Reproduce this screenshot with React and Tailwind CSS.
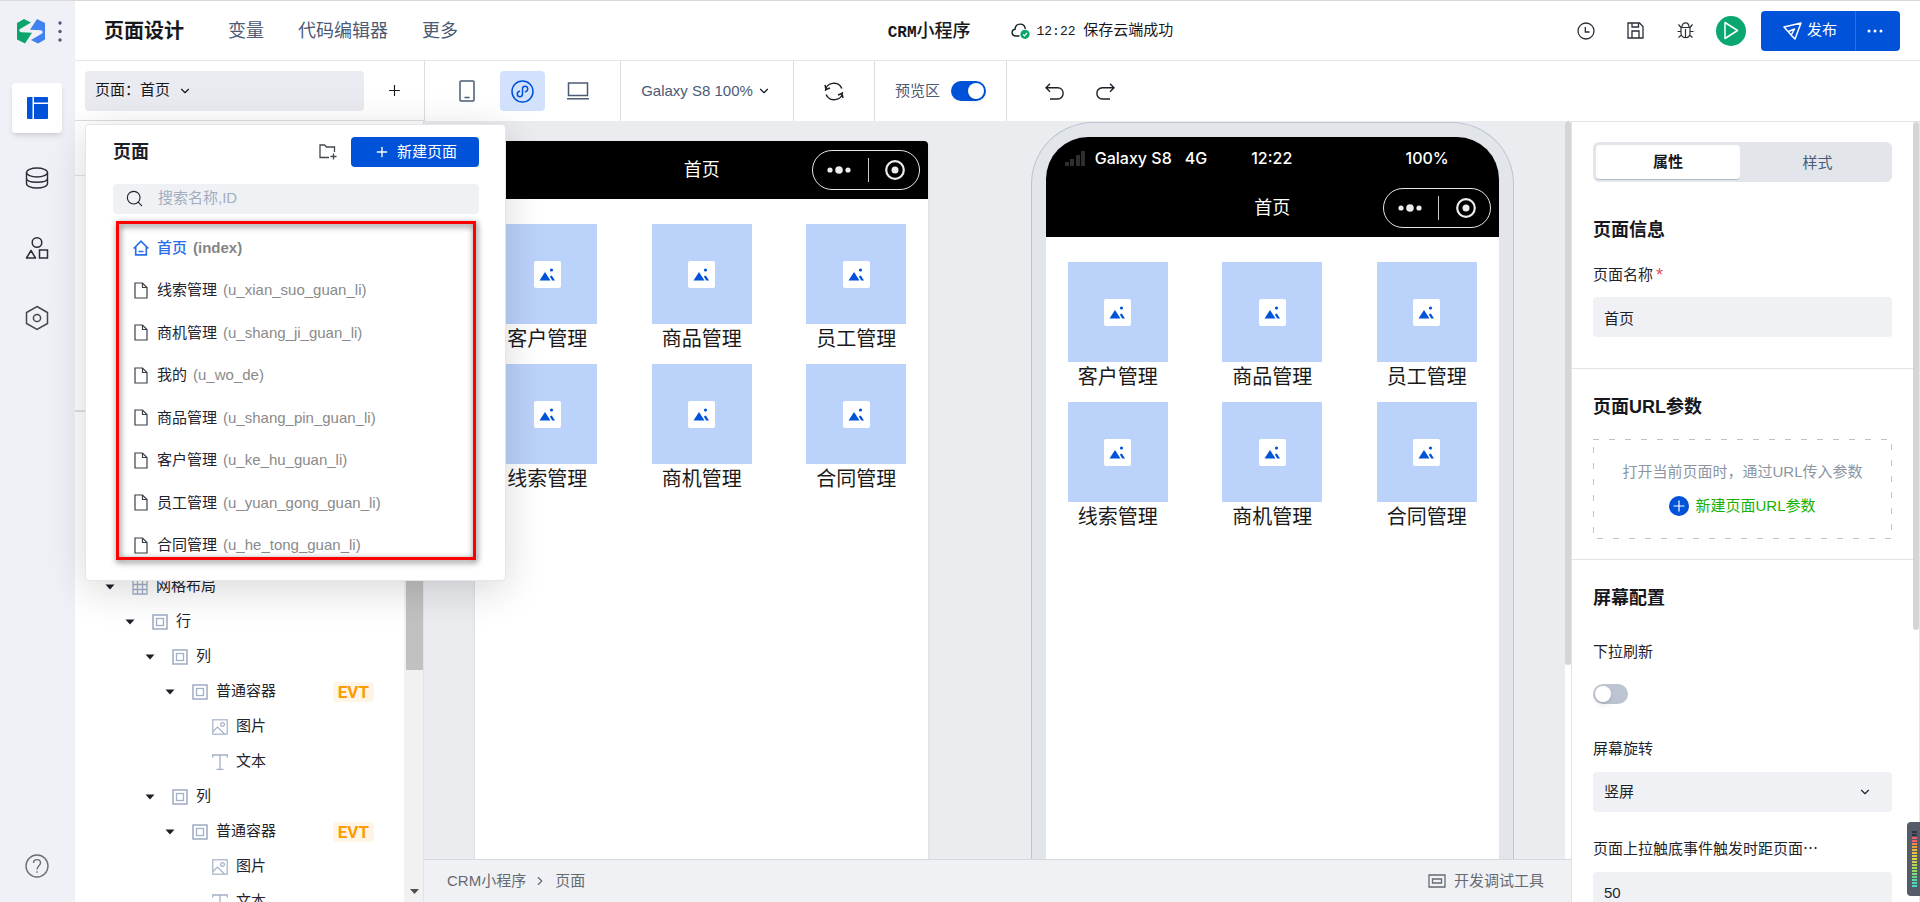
import React, { useState } from 'react';
import { ChevronDown, ChevronRight, Plus, Search } from 'lucide-react';

const pages = [
  { name: '线索管理', id: 'u_xian_suo_guan_li' },
  { name: '商机管理', id: 'u_shang_ji_guan_li' },
  { name: '我的', id: 'u_wo_de' },
  { name: '商品管理', id: 'u_shang_pin_guan_li' },
  { name: '客户管理', id: 'u_ke_hu_guan_li' },
  { name: '员工管理', id: 'u_yuan_gong_guan_li' },
  { name: '合同管理', id: 'u_he_tong_guan_li' },
];

const tree = [
  { pad: 'pl-[29px]', type: 'grid', name: '网格布局', open: true },
  { pad: 'pl-[49px]', type: 'box', name: '行', open: true },
  { pad: 'pl-[69px]', type: 'box', name: '列', open: true },
  { pad: 'pl-[89px]', type: 'box', name: '普通容器', open: true, evt: true },
  { pad: 'pl-[109px]', type: 'image', name: '图片' },
  { pad: 'pl-[109px]', type: 'text', name: '文本' },
  { pad: 'pl-[69px]', type: 'box', name: '列', open: true },
  { pad: 'pl-[89px]', type: 'box', name: '普通容器', open: true, evt: true },
  { pad: 'pl-[109px]', type: 'image', name: '图片' },
  { pad: 'pl-[109px]', type: 'text', name: '文本' },
];

const menus = ['客户管理', '商品管理', '员工管理', '线索管理', '商机管理', '合同管理'];

const meter = ['#2f3542', '#2f3542', '#f0616b', '#f0616b', '#ee8a4c', '#e9a13c', '#f0b53e', '#e8c040', '#d9cb45', '#e6d84a', '#c9d24c', '#b3d551', '#a3dc58', '#8edb6a', '#79e07c', '#63dc8d', '#58dca0', '#4fd8b0', '#46dcc0'];

const Logo = () => (
  <svg width="28" height="25" viewBox="0 0 28 25">
    <path d="M0 4 L7 0 L14 3.500 L3 10 Q1 12 4 13.300 L15 13.800 L8 24.500 L0 20.500 Z" fill="#0ba56c" />
    <path d="M28 20.500 L21 24.500 L14 21 L25 14.500 Q27 12.500 24 11.200 L13 10.700 L20 0 L28 4 Z" fill="#3f82f0" />
  </svg>
);

const DatabaseIcon = () => (
  <svg width="24" height="24" viewBox="0 0 24 24" fill="none" stroke="#2a2e38" strokeWidth="1.4">
    <ellipse cx="12" cy="6.500" rx="10.500" ry="4.500" />
    <path d="M1.500 6.500 V17.500 C1.500 23.500 22.500 23.500 22.500 17.500 V6.500" />
    <path d="M1.500 12.500 C1.500 17.500 22.500 17.500 22.500 12.500" />
  </svg>
);

const ShapesIcon = () => (
  <svg width="24" height="24" viewBox="0 0 24 24" fill="none" stroke="#2a2e38" strokeWidth="1.5">
    <circle cx="12" cy="6.500" r="4.800" />
    <path d="M6 14.500 L10.500 22 H1.500 Z" strokeLinejoin="round" />
    <rect x="14.500" y="14" width="8" height="8" />
  </svg>
);

const HexIcon = () => (
  <svg width="24" height="26" viewBox="0 0 24 26" fill="none" stroke="#43474f" strokeWidth="1.5">
    <path d="M12 1.500 L22.500 7.500 V18.500 L12 24.500 L1.500 18.500 V7.500 Z" />
    <circle cx="12" cy="13" r="3.600" />
  </svg>
);

const TreeIcon = ({ type }) => {
  if (type === 'grid') {
    return (
      <svg width="16" height="16" viewBox="0 0 16 16" fill="none" stroke="#a3b0c6">
        <path d="M1 1 H15 V15 H1 Z M5.500 1 V15 M10.500 1 V15 M1 5.500 H15 M1 10.500 H15" strokeWidth="1.3" />
      </svg>
    );
  }
  if (type === 'image') {
    return (
      <svg width="16" height="16" viewBox="0 0 16 16" fill="none" stroke="#a3b0c6" strokeWidth="1.2">
        <rect x="0.800" y="0.800" width="14.400" height="14.400" />
        <circle cx="10.500" cy="5.500" r="1.900" />
        <path d="M1 12.500 L5.500 8 L12.500 15" />
      </svg>
    );
  }
  if (type === 'text') {
    return (
      <svg width="16" height="16" viewBox="0 0 16 16" fill="none" stroke="#a3b0c6" strokeWidth="1.3">
        <path d="M0.700 3.500 V1 H15.300 V3.500 M8 1 V15 M4.500 15.300 H11.500" />
      </svg>
    );
  }
  return (
    <svg width="16" height="16" viewBox="0 0 16 16" fill="none" stroke="#a3b0c6">
      <rect x="1" y="1" width="14" height="14" strokeWidth="1.600" />
      <rect x="4.500" y="4.500" width="7" height="7" strokeWidth="1.300" />
    </svg>
  );
};

const FileIcon = () => (
  <svg width="14" height="17" viewBox="0 0 14 17" fill="none" stroke="#3b3f48" strokeWidth="1.200">
    <path d="M1 1 H8.500 L13 5.500 V16 H1 Z" />
    <path d="M8.500 1 V5.500 H13" />
  </svg>
);

const HomeIcon = () => (
  <svg width="16" height="16" viewBox="0 0 16 16" fill="none" stroke="#2a6ee8" strokeWidth="1.700">
    <path d="M0.700 8.500 L8 1.200 L15.300 8.500 M2.700 7 V14.800 H13.300 V7 M5.500 11.500 H10.500" />
  </svg>
);

const Switch = ({ id, checked, onChange }) => (
  <input
    type="checkbox"
    id={id}
    checked={checked}
    onChange={onChange}
    className="relative w-[35px] h-5 appearance-none rounded-full bg-[#bcc4d2] checked:bg-[#0052d9] before:absolute before:top-[2px] before:left-[2px] before:h-4 before:w-4 before:rounded-full before:bg-white before:shadow-md checked:before:left-[17px]"
  />
);

const Capsule = () => (
  <div className="absolute right-2 flex h-10 w-[108px] items-center justify-between rounded-full border border-white/90 pl-[14px] pr-[14px]">
    <svg width="24" height="8" viewBox="0 0 24 8" fill="#ececec">
      <circle cx="3" cy="4" r="2.600" />
      <circle cx="12" cy="4" r="3.800" />
      <circle cx="21" cy="4" r="2.600" />
    </svg>
    <span className="h-6 w-px bg-white/80" />
    <svg width="20" height="20" viewBox="0 0 20 20">
      <circle cx="10" cy="10" r="8.800" fill="none" stroke="#ececec" strokeWidth="2.200" />
      <circle cx="10" cy="10" r="3.500" fill="#ececec" />
    </svg>
  </div>
);

const MenuGrid = () => (
  <div className="grid grid-cols-[100px_100px_100px] justify-between px-[22px] pt-[25px]">
    {menus.map((m) => (
      <div key={m} className="h-[140px]">
        <div className="flex h-[100px] items-center justify-center bg-[#bbd2fb]">
          <div className="flex h-[27px] w-[27px] items-center justify-center rounded-xs bg-white">
            <svg width="17" height="13" viewBox="0 0 17 13" fill="#0052d9">
              <path d="M0.500 12.500 L6 4 L11.500 12.500 Z" />
              <path d="M10.800 8.500 L12.800 7.500 L16 12.500 H13.200 Z" />
              <circle cx="12.500" cy="2" r="1.600" />
            </svg>
          </div>
        </div>
        <p className="text-center text-xl leading-[30px] text-[#1a1a1a]">{m}</p>
      </div>
    ))}
  </div>
);

const PagePopover = () => (
  <div className="absolute left-0 top-[53px] z-20 w-[421px] rounded border border-[#e6e6e8] bg-white pb-[13px] pl-[27px] pr-[26px] pt-3 shadow-[0_8px_40px_rgba(0,0,0,0.16)]">
    <div className="flex h-[30px] items-center">
      <h2 className="text-lg font-bold leading-6 text-[#1c2029]">页面</h2>
      <button aria-label="新建文件夹" className="ml-auto mr-[14px]">
        <svg width="18" height="16" viewBox="0 0 18 16" fill="none" stroke="#43474f" strokeWidth="1.300">
          <path d="M10 13.500 H1 V1 H5.500 L7.500 3 H15.500 V8 M14.500 9.500 V15.500 M11.500 12.500 H17.500" />
        </svg>
      </button>
      <button className="flex h-[30px] w-32 items-center justify-center gap-[7px] rounded bg-[#0052d9] pl-px pt-px text-[15px] text-white">
        <Plus size={16} strokeWidth={2} />
        新建页面
      </button>
    </div>
    <label className="mt-[17px] flex h-[30px] items-center rounded bg-[#eff1f5] px-3">
      <Search size={19} strokeWidth={1.4} color="#1c2029" />
      <input
        type="text"
        aria-label="搜索页面"
        placeholder="搜索名称,ID"
        className="ml-[14px] min-w-0 flex-1 bg-transparent text-[15px] outline-none placeholder:text-[#a3adc0]"
      />
    </label>
    <div className="relative mt-[13px]">
      <ul className="flex h-[340px] flex-col pl-5 text-[15px] leading-5">
        <li className="flex flex-1 items-center">
          <HomeIcon />
          <a href="#index" className="ml-2 font-medium text-[#2a6ee8]">首页</a>
          <span className="ml-[6px] font-bold text-[#858585]">(index)</span>
        </li>
        {pages.map((p) => (
          <li key={p.id} className="flex flex-1 items-center pl-px">
            <FileIcon />
            <a href={'#' + p.id} className="ml-[9px] text-[#1f232c]">{p.name}</a>
            <span className="ml-[6px] text-[#8a8a8a]">({p.id})</span>
          </li>
        ))}
      </ul>
      <div className="pointer-events-none absolute -top-[6px] left-[3px] right-[3px] h-[339px] border-[3px] border-[#ff0000] drop-shadow-[1px_2px_3px_rgba(0,0,0,0.65)]" />
    </div>
  </div>
);

const Header = () => (
  <header className="flex h-[60px] shrink-0 items-center border-b border-[#e4e6eb] bg-white pl-[29px] pr-5">
    <h1 className="text-xl font-bold text-[#16181d]">页面设计</h1>
    <nav className="ml-11 flex gap-[34px] text-lg text-[#4b5b76]">
      <a href="#var">变量</a>
      <a href="#code">代码编辑器</a>
      <a href="#more">更多</a>
    </nav>
    <div className="flex flex-1 items-center justify-center pl-[26px]">
      <strong className="mr-[41px] text-lg font-medium text-[#16181d]">
        <span className="font-['Liberation_Mono'] text-base font-bold">CRM</span>小程序
      </strong>
      <svg width="19" height="16" viewBox="0 0 19 16" fill="none">
        <path d="M8.500 13 H5 C0 13 0 7 4 6.300 C4.500 -0.500 13.500 -0.500 14.300 6" stroke="#1c2029" strokeWidth="1.400" />
        <circle cx="14" cy="11.300" r="4.600" fill="#0ba56c" />
        <path d="M12 11.300 L13.500 12.800 L16 10" stroke="#fff" strokeWidth="1.200" />
      </svg>
      <span className="ml-[6px] text-[15px] text-[#16181d]">
        <span className="font-['Liberation_Mono'] text-[13px]">12:22 </span>保存云端成功
      </span>
    </div>
    <div className="flex items-center">
      <button aria-label="历史" className="mr-8">
        <svg width="18" height="18" viewBox="0 0 18 18" fill="none" stroke="#2a2e38" strokeWidth="1.300">
          <circle cx="9" cy="9" r="8" />
          <path d="M8.300 5 V10 H12.500" />
        </svg>
      </button>
      <button aria-label="保存" className="mr-[33px]">
        <svg width="17" height="17" viewBox="0 0 17 17" fill="none" stroke="#2a2e38" strokeWidth="1.300">
          <path d="M1 1 H12.500 L16 4.500 V16 H1 Z M5 1 V5 H11.500 V1 M5 16 V9 H12 V16" />
        </svg>
      </button>
      <button aria-label="调试" className="mr-[22px]">
        <svg width="17" height="17" viewBox="0 0 17 17" fill="none" stroke="#2a2e38" strokeWidth="1.200">
          <path d="M5 5 C5 -0.500 12 -0.500 12 5 M4 5.500 H13 V11 C13 17.300 4 17.300 4 11 Z M8.500 7 V15.500 M1.500 2.500 L4 5.500 M15.500 2.500 L13 5.500 M0.500 9.500 H4 M13 9.500 H16.500 M1.500 15.500 L4.500 13 M15.500 15.500 L12.500 13" />
        </svg>
      </button>
      <button aria-label="运行" className="mr-[15px] flex h-[30px] w-[30px] items-center justify-center rounded-full bg-[#0aa870]">
        <svg width="16" height="19" viewBox="0 0 16 19" fill="none" stroke="#fff" strokeWidth="1.500" strokeLinejoin="round">
          <path d="M2 1.500 L14.500 9.500 L2 17.500 Z" />
        </svg>
      </button>
      <div className="flex h-10 overflow-hidden rounded bg-[#0052d9] text-white">
        <button className="flex w-[94px] items-center justify-center gap-[5px] pl-1 text-[15px]">
          <svg width="19" height="18" viewBox="0 0 19 18" fill="none" stroke="#fff" strokeWidth="1.500" strokeLinejoin="round">
            <path d="M1 5 L18 1 L12 17 L8.500 13.500 L5.500 10 Z M5.500 9.500 L11.500 7 L8.500 12.500" />
          </svg>
          发布
        </button>
        <button aria-label="更多操作" className="flex w-[45px] items-center justify-center border-l border-[#2a6ee8] pr-[6px]">
          <svg width="16" height="4" viewBox="0 0 16 4" fill="#fff">
            <circle cx="2" cy="2" r="1.500" />
            <circle cx="8" cy="2" r="1.500" />
            <circle cx="14" cy="2" r="1.500" />
          </svg>
        </button>
      </div>
    </div>
  </header>
);

const Toolbar = ({ preview, setPreview }) => (
  <div className="flex h-[60px] shrink-0 bg-white">
    <div className="flex w-[350px] items-center border-b border-r border-[#d9dde4] pl-[10px]">
      <div className="relative">
        <button className="flex h-10 w-[279px] items-center rounded bg-[#e9ebf0] pl-[10px] text-[15px] text-[#16181d]">
          页面：首页
          <ChevronDown size={14} className="ml-2" />
        </button>
        <PagePopover />
      </div>
      <button aria-label="新增" className="ml-[22px] text-[#16181d]">
        <Plus size={17} strokeWidth={1.6} />
      </button>
    </div>
    <div className="flex w-[196px] items-center border-r border-[#d9dde4] pl-[34px]">
      <button aria-label="手机">
        <svg width="16" height="22" viewBox="0 0 16 22" fill="none" stroke="#4b5b76" strokeWidth="1.500">
          <rect x="1" y="1" width="14" height="20" rx="1" />
          <path d="M5.500 17.500 H10.500" />
        </svg>
      </button>
      <button aria-label="小程序" className="ml-[25px] flex h-10 w-[45px] items-center justify-center rounded bg-[#d3e2fc]">
        <svg width="23" height="23" viewBox="0 0 23 23" fill="none" stroke="#0052d9" strokeWidth="1.500">
          <circle cx="11.500" cy="11.500" r="10.500" />
          <path d="M14.500 11.800 C17.800 10.800 17.200 6.300 14.200 6.300 C12.500 6.300 11.500 7.500 11.500 9 V14 C11.500 15.500 10.500 16.700 8.800 16.700 C5.800 16.700 5.200 12.200 8.500 11.200" strokeLinecap="round" />
        </svg>
      </button>
      <button aria-label="电脑" className="ml-[22px]">
        <svg width="22" height="18" viewBox="0 0 22 18" fill="none" stroke="#4b5b76" strokeWidth="1.500">
          <rect x="1.500" y="1" width="19" height="12.500" />
          <path d="M0 16.800 H22" />
        </svg>
      </button>
    </div>
    <div className="flex w-[173px] items-center justify-center border-r border-[#d9dde4] pr-[2px]">
      <button className="flex items-center gap-1 text-[15px] text-[#4b5b76]">
        Galaxy S8 100%
        <ChevronDown size={14} color="#16181d" />
      </button>
    </div>
    <div className="flex w-[81px] items-center justify-center border-r border-[#d9dde4]">
      <button aria-label="刷新">
        <svg width="20" height="19" viewBox="0 0 20 19" fill="none" stroke="#1c2029" strokeWidth="1.500">
          <path d="M1.500 9 C1.500 0 15 -1.500 17.800 6.500 M18.500 10 C18.500 19 5 20.500 2.200 12.500 M1 3 L2 7.500 L6 6 M19 16 L18 11.500 L14 13" />
        </svg>
      </button>
    </div>
    <div className="flex w-[132px] items-center justify-center gap-[11px] border-r border-[#d9dde4]">
      <label htmlFor="preview" className="text-[15px] text-[#4b5b76]">预览区</label>
      <Switch id="preview" checked={preview} onChange={() => setPreview(!preview)} />
    </div>
    <div className="flex items-center gap-8 pl-[38px]">
      <button aria-label="撤销">
        <svg width="19" height="17" viewBox="0 0 19 17" fill="none" stroke="#1c2029" strokeWidth="1.400">
          <path d="M5 0.700 L1 4.700 L5 8.700 M1 4.700 H12.500 C20 4.700 20 16 12.500 16 H5" />
        </svg>
      </button>
      <button aria-label="重做">
        <svg width="19" height="17" viewBox="0 0 19 17" fill="none" stroke="#1c2029" strokeWidth="1.400">
          <path d="M14 0.700 L18 4.700 L14 8.700 M18 4.700 H6.500 C-1 4.700 -1 16 6.500 16 H14" />
        </svg>
      </button>
    </div>
  </div>
);

const Outline = () => (
  <aside className="flex w-[349px] shrink-0 flex-col overflow-hidden border-r border-[#dfe2e9] bg-white">
    <div className="h-[55px] shrink-0 border-b border-[#e0e2e6]" />
    <div className="h-[236px] shrink-0 border-b-2 border-[#e0e0e0]" />
    <div className="flex min-h-0 flex-1">
      <ul className="min-w-0 flex-1 overflow-hidden pt-[157px]">
        {tree.map((t, i) => (
          <li key={i} className={`flex h-[35px] items-center pr-[30px] text-[15px] text-[#1f232c] ${t.pad}`}>
            <span className="flex w-[28px] shrink-0">
              {t.open && (
                <svg width="12" height="6" viewBox="0 0 12 6" fill="#1c2029">
                  <path d="M1.500 0.500 H10.500 L6 5.500 Z" />
                </svg>
              )}
            </span>
            <TreeIcon type={t.type} />
            <span className="ml-2">{t.name}</span>
            {t.evt && (
              <span className="ml-auto rounded bg-[#fff5e6] px-[5px] font-['Roboto'] text-[17px] font-bold leading-5 text-[#ff9c00]">EVT</span>
            )}
          </li>
        ))}
      </ul>
      <div className="flex w-[19px] shrink-0 flex-col items-end bg-[#f1f1f1]">
        <div className="h-[258px] w-[17px] bg-[#c1c1c1]" />
        <svg width="17" height="17" viewBox="0 0 17 17" fill="#4f4f4f" className="mb-[2px] mt-auto">
          <path d="M4 6 H13 L8.500 11 Z" />
        </svg>
      </div>
    </div>
  </aside>
);

const Canvas = () => (
  <main className="flex min-w-0 flex-1 flex-col">
    <div className="flex min-h-0 flex-1">
      <div className="flex min-w-0 flex-1 justify-around overflow-hidden bg-[#ebecf0]">
        <section className="mt-5 w-[453px] rounded-t-sm bg-white shadow-sm">
          <div className="relative flex h-[58px] items-center justify-center rounded-t-sm bg-black text-lg text-white">
            首页
            <Capsule />
          </div>
          <MenuGrid />
        </section>
        <section className="mt-px rounded-t-[62px] border border-b-0 border-[#bcc4d2] bg-[#e2e5ea] px-[14px] pt-[14px]">
          <div className="h-full w-[453px] overflow-hidden rounded-t-[42px] bg-white">
            <div className="h-[100px] bg-black text-white">
              <div className="flex h-[42px] items-center pl-[19px] pr-[50px] font-['Inter'] text-base font-medium">
                <svg width="20" height="15" viewBox="0 0 20 15" fill="#2e2e2e" className="mr-[10px] shrink-0">
                  <path d="M0 11 H4 V15 H0 Z M5 8 H9 V15 H5 Z M11 4 H15 V15 H11 Z M16 0 H20 V15 H16 Z" />
                </svg>
                <span className="mr-[13px]">Galaxy S8</span>
                <span>4G</span>
                <span className="ml-11">12:22</span>
                <span className="ml-auto">100%</span>
              </div>
              <div className="relative flex h-[58px] items-center justify-center text-lg">
                首页
                <Capsule />
              </div>
            </div>
            <MenuGrid />
          </div>
        </section>
      </div>
      <div className="w-[6px] shrink-0 bg-white">
        <div className="h-[544px] rounded-full bg-[#d5d5d5]" />
      </div>
    </div>
    <footer className="flex h-[43px] shrink-0 items-center border-t border-[#d5d9e0] bg-[#eff1f5] pl-[23px] pr-[27px] text-[15px] text-[#666a70]">
      <span>CRM小程序</span>
      <ChevronRight size={14} className="ml-[7px] mr-2" />
      <span>页面</span>
      <button className="ml-auto flex items-center gap-2">
        <svg width="18" height="14" viewBox="0 0 18 14" fill="none" stroke="#666a70" strokeWidth="1.300">
          <path d="M1 1 H17 V13 H1 Z M4.500 5 H13.500 V9 H4.500 Z" />
        </svg>
        开发调试工具
      </button>
    </footer>
  </main>
);

const Properties = ({ refresh, setRefresh }) => (
  <aside className="flex w-[349px] shrink-0 overflow-hidden border-l border-t border-[#dfe2e9] bg-white text-[15px] leading-6 text-[#1f232c]">
    <div className="min-w-0 flex-1">
      <div className="px-[21px] pb-[31px] pt-5">
        <div className="flex h-10 rounded-md bg-[#e2e5ea] p-[3px] pb-[2px]">
          <button className="w-[144px] rounded-sm border-b border-[#b5bdcb] bg-white font-bold text-[#16181d]">属性</button>
          <button className="flex-1 pl-[6px] text-[#4b5b76]">样式</button>
        </div>
        <h2 className="mt-9 text-lg font-bold leading-6 text-[#16181d]">页面信息</h2>
        <label htmlFor="pageName" className="mt-[21px] flex items-center">
          页面名称<span className="ml-[3px] text-lg leading-6 text-[#e34d59]">*</span>
        </label>
        <input id="pageName" type="text" defaultValue="首页" className="mt-[10px] h-10 w-full rounded bg-[#eff1f5] px-[11px]" />
      </div>
      <div className="border-t border-[#e0e3e8] px-[21px] pb-5 pt-[26px]">
        <h2 className="text-lg font-bold leading-6 text-[#16181d]">页面URL参数</h2>
        <div className="relative mt-5 flex h-[100px] flex-col items-center pt-[21px]">
          <svg className="absolute left-0 top-0 h-full w-full" fill="none">
            <rect width="100%" height="100%" stroke="#bfc3ca" strokeWidth="2" strokeDasharray="6 10" />
          </svg>
          <p className="text-[#8c95a3]">打开当前页面时，通过URL传入参数</p>
          <button className="relative mt-[10px] flex items-center gap-[6px] text-[#17b201]">
            <svg width="20" height="20" viewBox="0 0 20 20">
              <circle cx="10" cy="10" r="10" fill="#0052d9" />
              <path d="M10 4.500 V15.500 M4.500 10 H15.500" stroke="#fff" strokeWidth="1.200" />
            </svg>
            新建页面URL参数
          </button>
        </div>
      </div>
      <div className="border-t border-[#e0e3e8] px-[21px] pt-[26px]">
        <h2 className="text-lg font-bold leading-6 text-[#16181d]">屏幕配置</h2>
        <label htmlFor="refresh" className="mt-[30px] block">下拉刷新</label>
        <div className="mt-5 flex">
          <Switch id="refresh" checked={refresh} onChange={() => setRefresh(!refresh)} />
        </div>
        <label htmlFor="rotate" className="mt-[33px] block">屏幕旋转</label>
        <div className="relative mt-[11px]">
          <select id="rotate" className="h-10 w-full appearance-none rounded bg-[#eff1f5] px-[11px]">
            <option>竖屏</option>
          </select>
          <ChevronDown size={14} className="pointer-events-none absolute right-5 top-[13px]" />
        </div>
        <label htmlFor="distance" className="mt-[25px] block truncate">
          页面上拉触底事件触发时距页面⋯
        </label>
        <input id="distance" type="text" defaultValue="50" className="mt-[11px] h-10 w-full rounded bg-[#eff1f5] px-[11px]" />
      </div>
    </div>
    <div className="w-[7px] shrink-0 border-r border-[#e6e6e6]">
      <div className="h-[508px] rounded-full bg-[#d5d5d5]" />
    </div>
  </aside>
);

const App = () => {
  const [preview, setPreview] = useState(true);
  const [refresh, setRefresh] = useState(false);

  return (
    <div className="relative flex h-screen overflow-hidden border-t border-[#d9d9d9] bg-white font-['Liberation_Sans','Noto_Sans_CJK_SC',sans-serif]">
      <aside className="flex w-[75px] shrink-0 flex-col items-center bg-[#eff1f6] pr-px">
        <div className="mt-[18px] flex h-[25px] items-center gap-[13px] pl-1">
          <Logo />
          <svg width="4" height="21" viewBox="0 0 4 21" fill="#4b5b76">
            <circle cx="2" cy="2" r="1.700" />
            <circle cx="2" cy="10.500" r="1.700" />
            <circle cx="2" cy="19" r="1.700" />
          </svg>
        </div>
        <button aria-label="页面" className="mt-[39px] flex h-[50px] w-[50px] items-center justify-center rounded bg-white shadow-md">
          <svg width="21" height="22" viewBox="0 0 21 22" fill="#0052d9">
            <path d="M0 1 Q0 0 1 0 H5.500 V22 H1 Q0 22 0 21 Z M7 0 H20 Q21 0 21 1 V5.500 H7 Z M7 7 H21 V21 Q21 22 20 22 H7 Z" />
          </svg>
        </button>
        <button aria-label="数据" className="mt-[33px]"><DatabaseIcon /></button>
        <button aria-label="组件" className="mt-[46px]"><ShapesIcon /></button>
        <button aria-label="设置" className="mt-[45px]"><HexIcon /></button>
        <button aria-label="帮助" className="mb-6 mt-auto">
          <svg width="24" height="24" viewBox="0 0 24 24" fill="none" stroke="#6b6f76" strokeWidth="1.400">
            <circle cx="12" cy="12" r="11" />
            <path d="M8.500 9 C8.500 4.500 15.500 4.500 15.500 9 C15.500 11.500 12 12 12 15.500 M12 17.200 V18.800" />
          </svg>
        </button>
      </aside>
      <div className="flex min-w-0 flex-1 flex-col">
        <Header />
        <Toolbar preview={preview} setPreview={setPreview} />
        <div className="flex min-h-0 flex-1">
          <Outline />
          <Canvas />
          <Properties refresh={refresh} setRefresh={setRefresh} />
        </div>
      </div>
      {/* level meter docked to the window edge */}
      <div className="absolute bottom-[6px] right-0 flex h-[74px] w-[13px] flex-col justify-between rounded-l bg-[#555b69] py-[9px] pl-[5px] pr-[3px]">
        {meter.map((c, i) => (
          <span key={i} className="h-[2px]" style={{ backgroundColor: c }} />
        ))}
      </div>
    </div>
  );
};

export default App;
